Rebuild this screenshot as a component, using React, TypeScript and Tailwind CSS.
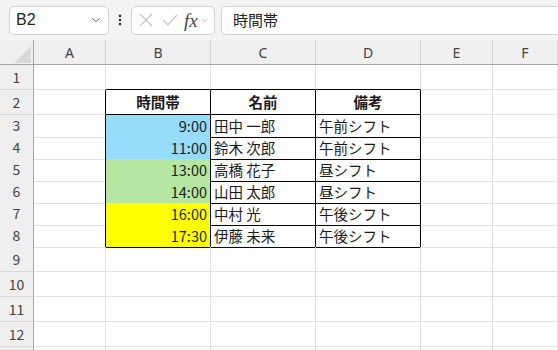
import { ChevronDown, EllipsisVertical } from 'lucide-react';

const cols = ['A', 'B', 'C', 'D', 'E', 'F'];

type Row = {
    n: number;
    h: string;
    cells?: [string, string, string];
    bg?: string;
    head?: boolean;
};

const rows: Row[] = [
    { n: 1, h: 'h-[25px]' },
    { n: 2, h: 'h-[25px]', cells: ['時間帯', '名前', '備考'], head: true },
    { n: 3, h: 'h-[22px]', cells: ['9:00', '田中 一郎', '午前シフト'], bg: 'bg-[#94dcf8]' },
    { n: 4, h: 'h-[22px]', cells: ['11:00', '鈴木 次郎', '午前シフト'], bg: 'bg-[#94dcf8]' },
    { n: 5, h: 'h-[22px]', cells: ['13:00', '高橋 花子', '昼シフト'], bg: 'bg-[#b5e6a2]' },
    { n: 6, h: 'h-[22px]', cells: ['14:00', '山田 太郎', '昼シフト'], bg: 'bg-[#b5e6a2]' },
    { n: 7, h: 'h-[22px]', cells: ['16:00', '中村 光', '午後シフト'], bg: 'bg-[#ffff00]' },
    { n: 8, h: 'h-[22px]', cells: ['17:30', '伊藤 未来', '午後シフト'], bg: 'bg-[#ffff00]' },
    { n: 9, h: 'h-[25px]' },
    { n: 10, h: 'h-[25px]' },
    { n: 11, h: 'h-[25px]' },
    { n: 12, h: 'h-[25px]' },
    { n: 13, h: 'h-[25px]' },
];

const grid = 'grid grid-cols-[34px_72px_105px_105px_105px_72px_1fr]';

function SheetRow({ row }: { row: Row }) {
    const t = row.cells;
    const topOfTable = row.n === 1;
    return (
        <div className={`${grid} ${row.h}`}>
            <div className="flex items-center justify-center bg-[#efefef] border-r border-r-[#a6a6a6] border-b border-b-[#dadada] text-[14px] text-[#444]">
                {row.n < 13 ? row.n : ''}
            </div>
            <div className={`border-b border-b-[#e1e1e1] border-r ${t ? 'border-r-black' : 'border-r-[#e1e1e1]'}`} />
            {[0, 1, 2].map((i) => (
                <div
                    key={i}
                    className={`flex items-center px-[3px] text-[14.5px] text-[#1a1a1a] border-r border-b ${
                        t ? 'border-black' : topOfTable ? 'border-r-[#e1e1e1] border-b-black' : 'border-[#e1e1e1]'
                    } ${t && i === 0 && row.bg ? row.bg : ''} ${
                        row.head ? 'justify-center font-bold' : i === 0 ? 'justify-end' : ''
                    }`}
                >
                    {t ? t[i] : ''}
                </div>
            ))}
            <div className="border-r border-b border-[#e1e1e1]" />
            <div className="border-r border-b border-[#e1e1e1]" />
        </div>
    );
}

export default function App() {
    return (
        <div
            className="w-[558px] h-[350px] overflow-hidden bg-white"
            style={{ fontFamily: '"Noto Sans CJK JP", "Noto Sans", sans-serif' }}
        >
            {/* formula bar */}
            <div className="flex h-[40px] items-center bg-[#f3f3f3] pl-[9px]">
                <div className="flex h-[29px] w-[100px] items-center justify-between rounded-[5px] border border-[#d4d4d4] bg-white pl-[6px] pr-[5px]">
                    <span className="text-[16px] text-[#222]" style={{ fontFamily: '"Liberation Sans", sans-serif' }}>B2</span>
                    <ChevronDown className="w-[14px] h-[14px] text-[#444]" strokeWidth={1.5} />
                </div>
                <div className="flex w-[22px] justify-center">
                    <EllipsisVertical className="w-[14px] h-[14px] text-[#333]" strokeWidth={2.5} />
                </div>
                <div className="flex h-[29px] w-[84px] items-center rounded-[5px] border border-[#d4d4d4] bg-white pl-[4px]">
                    <svg width="18" height="18" viewBox="0 0 18 18" className="ml-[1px]">
                        <path d="M3 3 L15 15 M15 3 L3 15" stroke="#c4c4c4" strokeWidth="1.2" fill="none" />
                    </svg>
                    <svg width="18" height="18" viewBox="0 0 18 18" className="ml-[6px]">
                        <path d="M2 9 L7 14 L16 4" stroke="#c4c4c4" strokeWidth="1.2" fill="none" />
                    </svg>
                    <span
                        className="ml-[5px] text-[19px] italic text-[#444] leading-none"
                        style={{ fontFamily: '"Liberation Serif", serif' }}
                    >
                        fx
                    </span>
                    <ChevronDown className="ml-[1px] w-[11px] h-[11px] text-[#999]" strokeWidth={1.5} />
                </div>
                <div className="ml-[6px] -mr-[4px] flex h-[29px] flex-1 items-center rounded-[5px] border border-[#d4d4d4] bg-white pl-[11px] text-[15px] text-[#222]">
                    時間帯
                </div>
            </div>

            {/* column headers */}
            <div className={`${grid} h-[25px] bg-[#efefef] border-b border-b-[#a6a6a6]`}>
                <div className="relative border-r border-r-[#a6a6a6]">
                    <svg width="34" height="24" className="absolute left-0 top-0">
                        <path d="M14 23 L31 23 L31 6 Z" fill="#d8d8d8" />
                    </svg>
                </div>
                {cols.map((c) => (
                    <div
                        key={c}
                        className="flex items-center justify-center border-r border-r-[#d6d6d6] text-[14px] text-[#444]"
                        style={{ fontFamily: '"Noto Sans", sans-serif' }}
                    >
                        {c}
                    </div>
                ))}
            </div>

            {rows.map((r) => (
                <SheetRow key={r.n} row={r} />
            ))}
        </div>
    );
}
